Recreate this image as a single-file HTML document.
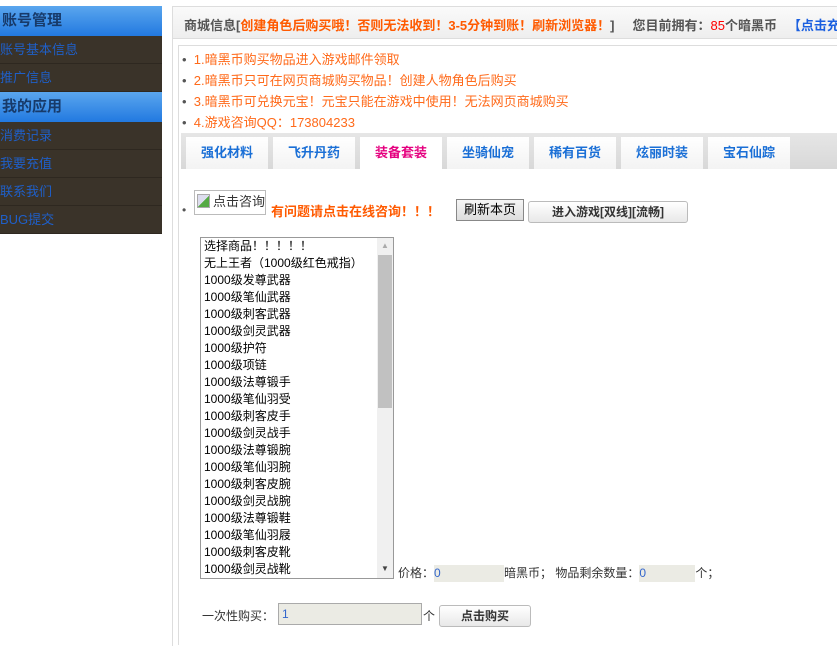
<!DOCTYPE html>
<html><head><meta charset="utf-8"><style>
*{margin:0;padding:0;box-sizing:border-box}
body{width:837px;height:638px;overflow:hidden;background:#fff;font-family:"Liberation Sans","Noto Sans CJK SC",sans-serif;font-size:12px;position:relative}
.a{position:absolute;white-space:nowrap}
.hd{position:absolute;left:0;width:162px;height:30px;background:linear-gradient(#5aa6ee,#2279e0);color:#173a6a;font-weight:bold;font-size:15px;line-height:30px;padding-left:2px}
.it{position:absolute;left:0;width:162px;height:28px;background:#3a3329;border-bottom:1px solid #2e2820;color:#1f5fc8;font-size:13px;line-height:27px}
.tab{position:absolute;top:137px;width:82px;height:32px;background:linear-gradient(#fff,#f3f3f3);color:#1a6fd6;font-weight:bold;font-size:13px;text-align:center;line-height:32px}
.o{color:#ff6a1a;font-size:13px}
</style></head><body>
<div class="hd" style="top:6px">账号管理</div>
<div class="it" style="top:36px">账号基本信息</div>
<div class="it" style="top:64px">推广信息</div>
<div class="hd" style="top:92px">我的应用</div>
<div class="it" style="top:122px">消费记录</div>
<div class="it" style="top:150px">我要充值</div>
<div class="it" style="top:178px">联系我们</div>
<div class="it" style="top:206px">BUG提交</div>

<div class="a" style="left:172px;top:6px;width:670px;height:640px;border-left:1px solid #ddd;border-top:1px solid #ddd"></div>
<div class="a" style="left:173px;top:7px;width:664px;height:32px;background:linear-gradient(#fafafa,#eee);border-bottom:1px solid #ddd"></div>
<div class="a" style="left:184px;top:15px;font-weight:bold;font-size:13px;color:#555">商城信息[<span style="color:#ff5a00">创建角色后购买哦！否则无法收到！3-5分钟到账！刷新浏览器！</span>]&nbsp;&nbsp;&nbsp;&nbsp;&nbsp;您目前拥有：<span style="color:#f00;font-weight:normal">85</span>个暗黑币&nbsp;&nbsp;&nbsp;<span style="color:#1a5fe0">【点击充值</span></div>
<div class="a" style="left:178px;top:45px;width:660px;height:600px;border-left:1px solid #ddd;border-top:1px solid #ddd"></div>

<div class="a" style="left:182px;top:49px;line-height:21px">
<div class="o"><span style="color:#555">•</span>&nbsp;&nbsp;1.暗黑币购买物品进入游戏邮件领取</div>
<div class="o"><span style="color:#555">•</span>&nbsp;&nbsp;2.暗黑币只可在网页商城购买物品！创建人物角色后购买</div>
<div class="o"><span style="color:#555">•</span>&nbsp;&nbsp;3.暗黑币可兑换元宝！元宝只能在游戏中使用！无法网页商城购买</div>
<div class="o"><span style="color:#555">•</span>&nbsp;&nbsp;4.游戏咨询QQ：173804233</div>
</div>

<div class="a" style="left:181px;top:133px;width:656px;height:36px;background:linear-gradient(#e6e6e6,#d8d8d8)"></div>
<div class="tab" style="left:186px">强化材料</div>
<div class="tab" style="left:273px">飞升丹药</div>
<div class="tab" style="left:360px;background:#fff;color:#e5007f;height:36px">装备套装</div>
<div class="tab" style="left:447px">坐骑仙宠</div>
<div class="tab" style="left:534px">稀有百货</div>
<div class="tab" style="left:621px">炫丽时装</div>
<div class="tab" style="left:708px">宝石仙踪</div>

<div class="a" style="left:182px;top:203px;color:#555;font-size:12px">•</div>
<div class="a" style="left:194px;top:190px;width:72px;height:25px;border:1px solid #bbb;font-size:13px;line-height:22px;padding-left:18px;color:#333">点击咨询</div>
<div class="a" style="left:197px;top:194px;width:13px;height:14px;border:1px solid #aaa;background:linear-gradient(135deg,#dde 50%,#5a4 50%)"></div>
<div class="a" style="left:271px;top:201px;font-weight:bold;font-size:13px;color:#ff5a00">有问题请点击在线咨询！！！</div>
<div class="a" style="left:456px;top:199px;width:68px;height:22px;border:1px solid #888;background:linear-gradient(#f5f5f5,#ddd);font-size:13px;text-align:center;line-height:20px">刷新本页</div>
<div class="a" style="left:528px;top:201px;width:160px;height:22px;border:1px solid #bbb;border-radius:3px;background:linear-gradient(#fff,#e8e8e8);font-size:12px;font-weight:bold;color:#333;text-align:center;line-height:21px">进入游戏[双线][流畅]</div>

<div class="a" style="left:200px;top:237px;width:194px;height:342px;border:1px solid #999;overflow:hidden;font-size:12px;line-height:17px;padding:0 3px">
选择商品！！！！！<br>无上王者（1000级红色戒指）<br>1000级发尊武器<br>1000级笔仙武器<br>1000级刺客武器<br>1000级剑灵武器<br>1000级护符<br>1000级项链<br>1000级法尊锻手<br>1000级笔仙羽受<br>1000级刺客皮手<br>1000级剑灵战手<br>1000级法尊锻腕<br>1000级笔仙羽腕<br>1000级刺客皮腕<br>1000级剑灵战腕<br>1000级法尊锻鞋<br>1000级笔仙羽屐<br>1000级刺客皮靴<br>1000级剑灵战靴
<div style="position:absolute;right:0;top:0;width:16px;height:340px;background:#f0f0f0"><div style="position:absolute;left:1px;top:17px;width:14px;height:153px;background:#c1c1c1"></div><div style="position:absolute;left:4px;bottom:5px;font-size:8px;line-height:8px;color:#444">▼</div><div style="position:absolute;left:4px;top:4px;font-size:8px;line-height:8px;color:#aaa">▲</div></div>
</div>
<div class="a" style="left:398px;top:564px;font-size:12px;color:#333">价格：<span style="display:inline-block;width:70px;height:17px;background:#ebebe4;color:#36c;vertical-align:middle;line-height:17px">0</span>暗黑币； 物品剩余数量：<span style="display:inline-block;width:56px;height:17px;background:#ebebe4;color:#36c;vertical-align:middle;line-height:17px">0</span>个；</div>

<div class="a" style="left:202px;top:607px;font-size:12px;color:#333">一次性购买：</div>
<div class="a" style="left:278px;top:603px;width:144px;height:22px;border:1px solid #aaa;background:#ebebe4;padding-left:3px;line-height:20px;color:#36c">1</div>
<div class="a" style="left:423px;top:607px;font-size:12px;color:#333">个</div>
<div class="a" style="left:439px;top:605px;width:92px;height:22px;border:1px solid #bbb;border-radius:3px;background:linear-gradient(#fff,#e8e8e8);font-weight:bold;text-align:center;line-height:21px;color:#333">点击购买</div>
</body></html>
